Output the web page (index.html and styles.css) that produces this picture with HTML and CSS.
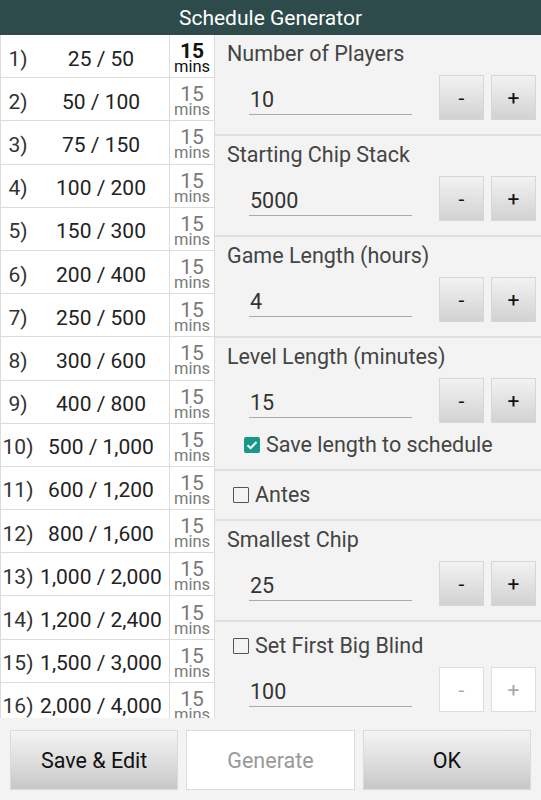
FILE: index.html
```html
<!DOCTYPE html>
<html>
<head>
<meta charset="utf-8">
<link rel="stylesheet" href="styles.css">
</head>
<body>
<div class="app">
  <div class="header">Schedule Generator</div>
  <div class="main">
    <div class="table">
      <div class="row"><div class="lvl"><span class="num">1)</span><span class="blinds">25 / 50</span></div><div class="mins first"><span class="m15">15</span><span class="mtxt">mins</span></div></div>
      <div class="row"><div class="lvl"><span class="num">2)</span><span class="blinds">50 / 100</span></div><div class="mins"><span class="m15">15</span><span class="mtxt">mins</span></div></div>
      <div class="row"><div class="lvl"><span class="num">3)</span><span class="blinds">75 / 150</span></div><div class="mins"><span class="m15">15</span><span class="mtxt">mins</span></div></div>
      <div class="row"><div class="lvl"><span class="num">4)</span><span class="blinds">100 / 200</span></div><div class="mins"><span class="m15">15</span><span class="mtxt">mins</span></div></div>
      <div class="row"><div class="lvl"><span class="num">5)</span><span class="blinds">150 / 300</span></div><div class="mins"><span class="m15">15</span><span class="mtxt">mins</span></div></div>
      <div class="row"><div class="lvl"><span class="num">6)</span><span class="blinds">200 / 400</span></div><div class="mins"><span class="m15">15</span><span class="mtxt">mins</span></div></div>
      <div class="row"><div class="lvl"><span class="num">7)</span><span class="blinds">250 / 500</span></div><div class="mins"><span class="m15">15</span><span class="mtxt">mins</span></div></div>
      <div class="row"><div class="lvl"><span class="num">8)</span><span class="blinds">300 / 600</span></div><div class="mins"><span class="m15">15</span><span class="mtxt">mins</span></div></div>
      <div class="row"><div class="lvl"><span class="num">9)</span><span class="blinds">400 / 800</span></div><div class="mins"><span class="m15">15</span><span class="mtxt">mins</span></div></div>
      <div class="row"><div class="lvl"><span class="num">10)</span><span class="blinds">500 / 1,000</span></div><div class="mins"><span class="m15">15</span><span class="mtxt">mins</span></div></div>
      <div class="row"><div class="lvl"><span class="num">11)</span><span class="blinds">600 / 1,200</span></div><div class="mins"><span class="m15">15</span><span class="mtxt">mins</span></div></div>
      <div class="row"><div class="lvl"><span class="num">12)</span><span class="blinds">800 / 1,600</span></div><div class="mins"><span class="m15">15</span><span class="mtxt">mins</span></div></div>
      <div class="row"><div class="lvl"><span class="num">13)</span><span class="blinds">1,000 / 2,000</span></div><div class="mins"><span class="m15">15</span><span class="mtxt">mins</span></div></div>
      <div class="row"><div class="lvl"><span class="num">14)</span><span class="blinds">1,200 / 2,400</span></div><div class="mins"><span class="m15">15</span><span class="mtxt">mins</span></div></div>
      <div class="row"><div class="lvl"><span class="num">15)</span><span class="blinds">1,500 / 3,000</span></div><div class="mins"><span class="m15">15</span><span class="mtxt">mins</span></div></div>
      <div class="row"><div class="lvl"><span class="num">16)</span><span class="blinds">2,000 / 4,000</span></div><div class="mins"><span class="m15">15</span><span class="mtxt">mins</span></div></div>
    </div>
    <div class="panel">
      <div class="section">
        <div class="label">Number of Players</div>
        <div class="field"><div class="input">10</div><div class="btn">-</div><div class="btn">+</div></div>
      </div>
      <div class="section">
        <div class="label">Starting Chip Stack</div>
        <div class="field"><div class="input">5000</div><div class="btn">-</div><div class="btn">+</div></div>
      </div>
      <div class="section">
        <div class="label">Game Length (hours)</div>
        <div class="field"><div class="input">4</div><div class="btn">-</div><div class="btn">+</div></div>
      </div>
      <div class="section tall">
        <div class="label">Level Length (minutes)</div>
        <div class="field"><div class="input">15</div><div class="btn">-</div><div class="btn">+</div></div>
        <div class="check-row indent"><span class="cb checked"><svg viewBox="0 0 16 16" width="16" height="16"><path d="M3.5 8.2 L6.6 11.2 L12.5 5" fill="none" stroke="#fff" stroke-width="2"/></svg></span><span>Save length to schedule</span></div>
      </div>
      <div class="section short">
        <div class="check-row"><span class="cb"></span><span>Antes</span></div>
      </div>
      <div class="section">
        <div class="label">Smallest Chip</div>
        <div class="field"><div class="input">25</div><div class="btn">-</div><div class="btn">+</div></div>
      </div>
      <div class="section last">
        <div class="check-row top"><span class="cb"></span><span>Set First Big Blind</span></div>
        <div class="field"><div class="input">100</div><div class="btn disabled">-</div><div class="btn disabled">+</div></div>
      </div>
    </div>
  </div>
  <div class="footer">
    <div class="fbtn">Save &amp; Edit</div>
    <div class="fbtn disabled">Generate</div>
    <div class="fbtn">OK</div>
  </div>
</div>
</body>
</html>
```
FILE: styles.css
```css
html, body {
  margin: 0;
  padding: 0;
}
body {
  font-family: Roboto, "Noto Sans", sans-serif;
  background: #f3f3f3;
  width: 541px;
  height: 800px;
  overflow: hidden;
}
.app {
  display: flex;
  flex-direction: column;
  height: 800px;
}
.header {
  height: 35px;
  background: #2d4b4a;
  color: #fff;
  font-size: 21px;
  display: flex;
  align-items: center;
  justify-content: center;
}
.main {
  height: 683px;
  display: flex;
  overflow: hidden;
}
.table {
  width: 215px;
  flex: none;
  background: #fff;
  border-right: 1px solid #dcdcdc;
  box-sizing: border-box;
  overflow: hidden;
}
.row {
  height: 43.2px;
  box-sizing: border-box;
  border-bottom: 1.5px solid #dcdcdc;
  border-left: 1.5px solid #dcdcdc;
  display: flex;
}
.lvl {
  width: 169px;
  flex: none;
  border-right: 1.5px solid #dcdcdc;
  display: flex;
  align-items: center;
  font-size: 21px;
  color: #222;
  padding-top: 5px;
  box-sizing: border-box;
}
.num {
  width: 34px;
  flex: none;
  text-align: center;
  color: #333;
}
.blinds {
  flex: 1;
  text-align: center;
  padding-right: 2px;
  white-space: nowrap;
}
.mins {
  flex: 1;
  display: flex;
  flex-direction: column;
  align-items: center;
  justify-content: center;
  color: #7a7a7a;
  padding-top: 4px;
}
.m15 {
  font-size: 21px;
  line-height: 18px;
}
.mtxt {
  font-size: 16.5px;
  line-height: 14px;
}
.mins.first {
  color: #111;
}
.mins.first .m15 {
  font-weight: bold;
}
.panel {
  flex: 1;
  display: flex;
  flex-direction: column;
}
.section {
  height: 101px;
  box-sizing: border-box;
  border-bottom: 2px solid #e0e0e0;
  padding: 7px 4px 0 12px;
  flex: none;
}
.section.tall {
  height: 133px;
}
.section.short {
  height: 50px;
  padding-top: 11px;
}
.section.last {
  border-bottom: none;
  height: 98px;
  padding-top: 11px;
}
.label {
  font-size: 21.5px;
  color: #444;
  line-height: 24px;
}
.field {
  display: flex;
  align-items: center;
  margin-top: 9px;
}
.input {
  width: 162px;
  margin-left: 22px;
  font-size: 21.5px;
  color: #333;
  line-height: 24px;
  padding: 1px 0 2px 1px;
  border-bottom: 1.5px solid #aaa;
  margin-right: 27px;
  margin-top: 6px;
}
.btn {
  width: 45px;
  height: 45px;
  box-sizing: border-box;
  border: 1px solid #d6d6d6;
  background: linear-gradient(#f2f2f2, #d2d2d2);
  display: flex;
  align-items: center;
  justify-content: center;
  font-size: 21px;
  color: #111;
  margin-right: 7px;
}
.btn.disabled {
  background: #fff;
  color: #aaa;
  border-color: #ddd;
}
.check-row {
  display: flex;
  align-items: center;
  font-size: 21.5px;
  color: #444;
  gap: 6px;
}
.check-row.indent {
  margin: 9px 0 0 17px;
}
.cb {
  width: 14px;
  height: 14px;
  border: 1.5px solid #555;
  box-sizing: content-box;
  display: inline-flex;
  border-radius: 1px;
  margin-left: 6px;
}
.cb.checked {
  width: 16px;
  height: 16px;
  border: none;
  background: #17998a;
  border-radius: 2px;
  margin-left: 0;
}
.footer {
  flex: 1;
  display: flex;
  gap: 8px;
  padding: 12px 10px 10px 10px;
}
.fbtn {
  flex: 1;
  height: 60px;
  box-sizing: border-box;
  border: 1.5px solid #dadada;
  background: linear-gradient(#f4f4f4, #c8c8c8);
  display: flex;
  align-items: center;
  justify-content: center;
  font-size: 21.5px;
  color: #111;
}
.fbtn.disabled {
  background: #fff;
  color: #999;
}
```
